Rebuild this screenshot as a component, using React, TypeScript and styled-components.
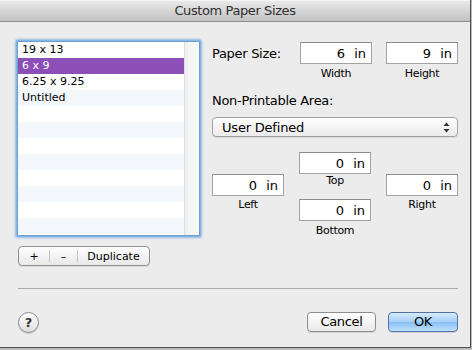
import styled, { createGlobalStyle } from "styled-components";

const GlobalStyle = createGlobalStyle`
  html, body {
    margin: 0;
    padding: 0;
    background: #bcbcbc;
  }
  body {
    font-family: "DejaVu Sans", "Liberation Sans", sans-serif;
    color: #000;
  }
`;

const Window = styled.div`
  width: 470px;
  height: 347px;
  background: #ececec;
  border-right: 1px solid #4e4e4e;
  border-bottom: 1px solid #4e4e4e;
  display: flex;
  flex-direction: column;
  overflow: hidden;
`;

const TitleBar = styled.div`
  height: 21px;
  flex: none;
  border-bottom: 1px solid #8e8e8e;
  background: linear-gradient(#ececec, #d2d2d2 60%, #c2c2c2);
  box-shadow: inset 0 1px 0 #f6f6f6;
  display: flex;
  align-items: center;
  justify-content: center;
  font-size: 13px;
  letter-spacing: -0.4px;
  color: #2e2e2e;
`;

const Main = styled.div`
  display: flex;
  padding: 20px 12px 0 18px;
  gap: 12px;
`;

const ListColumn = styled.div`
  display: flex;
  flex-direction: column;
  gap: 10px;
`;

const List = styled.div`
  width: 181px;
  height: 193px;
  display: flex;
  background: #fff;
  border: 1px solid #6e9fd3;
  box-shadow: 0 0 0 1px #86b6e6, 0 0 2px 2px rgba(120, 170, 225, 0.75);
  border-radius: 1px;
  margin-left: -1px;
  margin-top: -1px;
`;

const Rows = styled.div`
  flex: 1;
  display: flex;
  flex-direction: column;
`;

const Row = styled.div<{ $striped?: boolean; $selected?: boolean }>`
  height: 16px;
  flex: none;
  line-height: 16px;
  padding-left: 4px;
  font-size: 11px;
  color: ${(p) => (p.$selected ? "#fff" : "#000")};
  background: ${(p) =>
    p.$selected ? "#8b4fb7" : p.$striped ? "#f3f6fa" : "#fff"};
`;

const ScrollTrack = styled.div`
  width: 14px;
  border-left: 1px solid #dedede;
  background: linear-gradient(90deg, #ededed, #f7f7f7 50%, #fafafa);
`;

const Segmented = styled.div`
  display: flex;
  width: 130px;
  height: 18px;
  border: 1px solid #8f8f8f;
  border-radius: 4px;
  background: linear-gradient(#ffffff, #f3f3f3 50%, #e9e9e9);
  box-shadow: 0 1px 0 rgba(0, 0, 0, 0.08);
  font-size: 11px;
`;

const Segment = styled.div<{ $width: number; $last?: boolean }>`
  width: ${(p) => p.$width}px;
  display: flex;
  align-items: center;
  justify-content: center;
  border-right: ${(p) => (p.$last ? "none" : "1px solid #c4c4c4")};
  margin: ${(p) => (p.$last ? "0" : "3px 0")};
  flex: ${(p) => (p.$last ? "1" : "none")};
`;

const Form = styled.div`
  width: 246px;
  display: flex;
  flex-direction: column;
`;

const SizeRow = styled.div`
  display: flex;
  align-items: flex-start;
  gap: 14px;
`;

const Label = styled.div`
  font-size: 13px;
  letter-spacing: -0.3px;
  line-height: 16px;
`;

const SizeLabel = styled(Label)`
  width: 74px;
  margin-top: 4px;
`;

const FieldGroup = styled.div<{ $pad?: number }>`
  width: 72px;
  display: flex;
  flex-direction: column;
  align-items: center;
  padding-top: ${(p) => p.$pad ?? 0}px;
`;

const Field = styled.div`
  box-sizing: border-box;
  width: 72px;
  height: 22px;
  background: #fff;
  border: 1px solid #a3a3a3;
  border-top-color: #8c8c8c;
  display: flex;
  align-items: center;
  justify-content: flex-end;
  gap: 9px;
  padding-right: 5px;
  font-size: 13px;
`;

const Caption = styled.div<{ $gap?: number }>`
  font-size: 11px;
  letter-spacing: -0.3px;
  line-height: 14px;
  margin-top: ${(p) => p.$gap ?? 3}px;
`;

const AreaLabel = styled(Label)`
  margin-top: 12px;
`;

const Popup = styled.div`
  margin-top: 8px;
  height: 18px;
  border: 1px solid #a2a2a2;
  border-radius: 4px;
  background: linear-gradient(#ffffff, #f4f4f4 50%, #ebebeb);
  box-shadow: 0 1px 0 rgba(0, 0, 0, 0.08);
  display: flex;
  align-items: center;
  justify-content: space-between;
  padding: 0 7px 0 9px;
  font-size: 13px;
  letter-spacing: -0.2px;
`;

const Margins = styled.div`
  margin-top: 15px;
  display: flex;
  justify-content: space-between;
`;

const Spacer = styled.div`
  height: 11px;
`;

const Separator = styled.div`
  margin: 22px 12px 0 18px;
  height: 1px;
  background: #a9a9a9;
`;

const Footer = styled.div`
  margin: 21px 12px 0 18px;
  display: flex;
  align-items: center;
  justify-content: space-between;
`;

const HelpButton = styled.div`
  box-sizing: border-box;
  width: 21px;
  height: 21px;
  border-radius: 50%;
  border: 1px solid #8b8b8b;
  background: linear-gradient(#ffffff, #ececec 60%, #dedede);
  box-shadow: 0 1px 1px rgba(0, 0, 0, 0.15);
  display: flex;
  align-items: center;
  justify-content: center;
  font-size: 13px;
  font-weight: bold;
  color: #333;
  margin-top: 2px;
`;

const Buttons = styled.div`
  display: flex;
  gap: 12px;
`;

const PushButton = styled.div<{ $primary?: boolean }>`
  box-sizing: border-box;
  width: ${(p) => (p.$primary ? 70 : 69)}px;
  height: 20px;
  border-radius: 4px;
  border: 1px solid ${(p) => (p.$primary ? "#5273a3" : "#8e8e8e")};
  background: ${(p) =>
    p.$primary
      ? "linear-gradient(#d6ebfd, #a6d0f8 50%, #86c0f5 51%, #bfe0fc)"
      : "linear-gradient(#ffffff, #f4f4f4 50%, #eaeaea)"};
  box-shadow: 0 1px 0 rgba(0, 0, 0, 0.1);
  display: flex;
  align-items: center;
  justify-content: center;
  font-size: 13px;
  letter-spacing: -0.3px;
`;

const rows = ["19 x 13", "6 x 9", "6.25 x 9.25", "Untitled"];

const SizeField = ({ value }: { value: string }) => (
  <Field>
    <span>{value}</span>
    <span>in</span>
  </Field>
);

const Arrows = () => (
  <svg width="7" height="11" viewBox="0 0 7 11">
    <path d="M3.5 0.5 L6.5 4 L0.5 4 Z" fill="#333" />
    <path d="M3.5 10.5 L6.5 7 L0.5 7 Z" fill="#333" />
  </svg>
);

export default function App() {
  return (
    <>
      <GlobalStyle />
      <Window>
        <TitleBar>Custom Paper Sizes</TitleBar>
        <Main>
          <ListColumn>
            <List>
              <Rows>
                {Array.from({ length: 12 }).map((_, i) => (
                  <Row key={i} $selected={i === 1} $striped={i % 2 === 1}>
                    {rows[i] ?? ""}
                  </Row>
                ))}
              </Rows>
              <ScrollTrack />
            </List>
            <Segmented>
              <Segment $width={30}>+</Segment>
              <Segment $width={27}>–</Segment>
              <Segment $width={72} $last>
                Duplicate
              </Segment>
            </Segmented>
          </ListColumn>
          <Form>
            <SizeRow>
              <SizeLabel>Paper Size:</SizeLabel>
              <FieldGroup>
                <SizeField value="6" />
                <Caption>Width</Caption>
              </FieldGroup>
              <FieldGroup>
                <SizeField value="9" />
                <Caption>Height</Caption>
              </FieldGroup>
            </SizeRow>
            <AreaLabel>Non-Printable Area:</AreaLabel>
            <Popup>
              <span>User Defined</span>
              <Arrows />
            </Popup>
            <Margins>
              <FieldGroup $pad={22}>
                <SizeField value="0" />
                <Caption $gap={2}>Left</Caption>
              </FieldGroup>
              <FieldGroup>
                <SizeField value="0" />
                <Caption $gap={0}>Top</Caption>
                <Spacer />
                <SizeField value="0" />
                <Caption>Bottom</Caption>
              </FieldGroup>
              <FieldGroup $pad={22}>
                <SizeField value="0" />
                <Caption $gap={2}>Right</Caption>
              </FieldGroup>
            </Margins>
          </Form>
        </Main>
        <Separator />
        <Footer>
          <HelpButton>?</HelpButton>
          <Buttons>
            <PushButton>Cancel</PushButton>
            <PushButton $primary>OK</PushButton>
          </Buttons>
        </Footer>
      </Window>
    </>
  );
}
